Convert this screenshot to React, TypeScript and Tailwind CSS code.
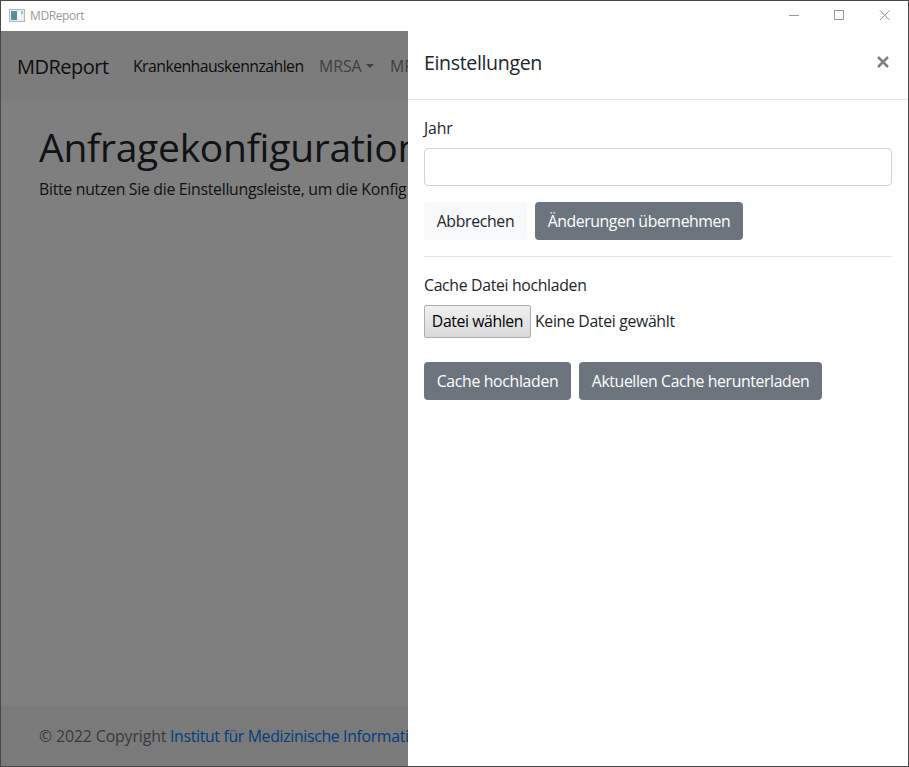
import React from "react";

function TitleBar() {
  return (
    <header className="flex h-[30px] shrink-0 items-center bg-white">
      <svg className="-mt-[2px] ml-2 h-[14px] w-4" viewBox="0 0 16 14" shapeRendering="crispEdges">
        <rect x="0.5" y="1.5" width="15" height="12" fill="#e9edef" stroke="#b3b8bd" />
        <rect x="2" y="3" width="6" height="9" fill="#5c8fa8" />
        <rect x="3" y="6" width="4" height="5" fill="#4f937c" />
        <rect x="9" y="3" width="3" height="9" fill="#f7f7f7" />
        <rect x="12" y="3" width="2" height="3" fill="#9fc4bd" />
      </svg>
      <span className="ml-[5px] text-[12px] leading-none tracking-[-0.4px] text-[#999]">MDReport</span>
      <svg className="-mt-[2px] ml-auto mr-[17px] h-[11px] w-[102px]" viewBox="0 0 102 11" fill="none" stroke="#999">
        <path d="M0 5.5H10M45.5 0.5h9v9h-9z" shapeRendering="crispEdges" />
        <path d="M91 0.5l9.5 9.5M100.5 0.5l-9.5 9.5" />
      </svg>
    </header>
  );
}

function PageContent() {
  return (
    <div className="flex h-full w-full flex-col bg-white text-[#212529]">
      <nav className="h-[70px] shrink-0 bg-[#f8f9fa]">
        <div className="flex h-full items-center whitespace-nowrap pl-4 pt-[2px]">
          <span className="w-[92px] shrink-0 text-[20px] tracking-[-0.5px] text-[#1a1a1a]">MDReport</span>
          <span className="ml-6 w-[171px] shrink-0 text-[15.8px] tracking-[-0.55px] text-[#1a1a1a]">
            Krankenhauskennzahlen
          </span>
          <span className="ml-[15px] flex w-[56px] shrink-0 items-center text-[15.8px] text-[#7f7f80]">
            MRSA
            <i className="-mt-[2px] ml-1 border-x-[4.8px] border-t-[4.8px] border-x-transparent border-t-[#7f7f80]" />
          </span>
          <span className="ml-[15px] text-[15.8px] text-[#7f7f80]">MR</span>
        </div>
      </nav>
      <main className="flex-1 whitespace-nowrap pl-[38px] pt-[22px]">
        <h1 className="text-[39px] leading-[48px] tracking-[-0.25px]">Anfragekonfiguration</h1>
        <p className="mt-[6px] text-[15.8px] leading-6 tracking-[-0.28px]">
          Bitte nutzen Sie die Einstellungsleiste, um die Konfig
        </p>
      </main>
      <footer className="h-[60px] shrink-0 bg-[#f5f5f5]">
        <div className="flex h-full items-center whitespace-nowrap pl-[38px] pt-[2px] text-[15.8px] text-[#6c757d]">
          <span className="w-[131px] shrink-0 tracking-[-0.1px]">© 2022 Copyright</span>
          <a className="tracking-[-0.32px] text-[#007bff]">Institut für Medizinische Informati</a>
        </div>
      </footer>
    </div>
  );
}

function SettingsPanel() {
  return (
    <aside className="absolute inset-y-0 right-0 w-[500px] whitespace-nowrap bg-white text-[15.8px] tracking-[-0.32px] text-[#212529]">
      <div className="flex h-[69px] items-center justify-between border-b border-[#dee2e6] pl-4 pr-[19px]">
        <h2 className="-mt-1 text-[19.6px] tracking-[-0.37px]">Einstellungen</h2>
        <svg className="-mt-[6px] h-3 w-3" viewBox="0 0 12 12" stroke="#7f7f7f" strokeWidth="2.5">
          <path d="M1 1l10 10M11 1L1 11" />
        </svg>
      </div>
      <div className="px-4 pt-4">
        <label className="block leading-6 tracking-[-0.15px]">Jahr</label>
        <input className="mt-2 block h-[38px] w-full rounded border border-[#ced4da] bg-white px-3 outline-none" />
        <div className="mt-4 flex gap-2">
          <button className="h-[38px] w-[103px] rounded bg-[#f8f9fa] pt-[2px]">Abbrechen</button>
          <button className="h-[38px] w-[208px] rounded bg-[#6c757d] pt-[2px] tracking-[-0.42px] text-white">
            Änderungen übernehmen
          </button>
        </div>
        <hr className="my-4 border-[#e5e5e5]" />
        <label className="block leading-6">Cache Datei hochladen</label>
        <div className="mt-2 flex h-[33px] items-center gap-1">
          <button className="h-[33px] w-[107px] rounded-[2px] border border-[#adadad] bg-linear-to-b from-[#f0f0f0] to-[#d9d9d9] tracking-[-0.4px] text-black">
            Datei wählen
          </button>
          <span>Keine Datei gewählt</span>
        </div>
        <div className="mt-6 flex gap-2 text-white">
          <button className="h-[38px] w-[147px] rounded bg-[#6c757d] pt-[2px]">Cache hochladen</button>
          <button className="h-[38px] w-[243px] rounded bg-[#6c757d] pt-[2px] tracking-[-0.38px]">
            Aktuellen Cache herunterladen
          </button>
        </div>
      </div>
    </aside>
  );
}

export default function App() {
  return (
    <div className="flex h-[767px] w-[909px] flex-col overflow-hidden border border-[#474747] font-['Open_Sans','Noto_Sans',sans-serif]">
      <TitleBar />
      <div className="relative min-h-0 flex-1 overflow-hidden">
        <PageContent />
        <div className="absolute inset-0 bg-black/50" />
        <SettingsPanel />
      </div>
    </div>
  );
}
